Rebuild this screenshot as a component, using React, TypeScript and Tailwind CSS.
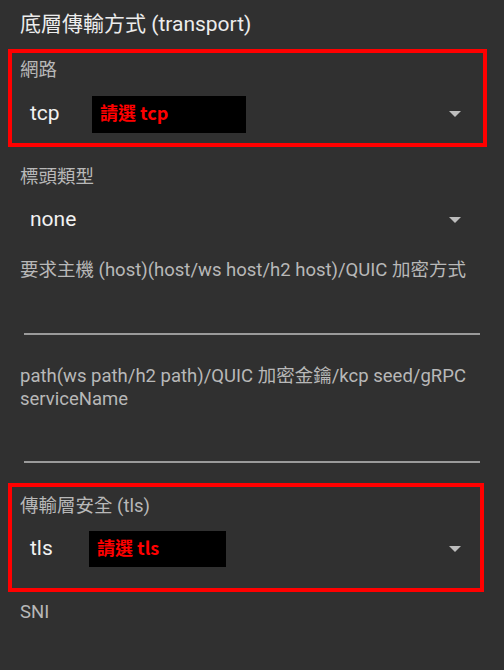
import React from "react";

const FONT = "font-['Roboto','Noto_Sans_CJK_TC',sans-serif]";

function Caret() {
  return (
    <svg width="12" height="7" viewBox="0 0 12 7" className="shrink-0">
      <path d="M0 0 L12 0 L6 6 Z" fill="#bdbdbd" />
    </svg>
  );
}

function Label({ children, className = "" }: { children: React.ReactNode; className?: string }) {
  return <div className={"text-[18.5px] leading-6 text-[#b8b8b8] whitespace-nowrap " + className}>{children}</div>;
}

function SelectRow({
  value,
  note,
  noteClass = "",
  valueClass = "w-[62px]",
  className = "",
}: {
  value: string;
  note?: string;
  noteClass?: string;
  valueClass?: string;
  className?: string;
}) {
  return (
    <div className={"h-10 flex items-center " + className}>
      <span className={"text-[21px] text-[#f2f2f2] " + valueClass}>{value}</span>
      {note && (
        <span
          className={
            "bg-black flex items-center pl-2 pb-[3px] text-[18px] font-bold text-[#ff0000] font-['Noto_Sans_CJK_TC',sans-serif] " +
            noteClass
          }
        >
          {note}
        </span>
      )}
      <span className="flex-1" />
      <Caret />
    </div>
  );
}

export default function App() {
  return (
    <div className={"w-[504px] h-[670px] bg-[#303030] overflow-hidden " + FONT}>
      <div className="h-[49px] flex items-center pl-5 pt-[1px] text-[21px] text-[#ececec]">底層傳輸方式 (transport)</div>

      <div className="ml-2 w-[479px] h-[98px] border-4 border-[#ff0000] pl-2 pr-[22px]">
        <Label className="mt-[5px]">網路</Label>
        <SelectRow value="tcp" note="請選 tcp" noteClass="w-[154px] h-[37px]" className="mt-3 pl-[10px]" />
      </div>

      <div className="pl-5 pr-[43px]">
        <Label className="mt-[18px]">標頭類型</Label>
        <SelectRow value="none" className="mt-[11px] pl-[10px]" />
      </div>

      <div className="pl-5 pr-4">
        <Label className="mt-[18px]">要求主機 (host)(host/ws host/h2 host)/QUIC 加密方式</Label>
        <div className="mt-[51px] ml-1 w-[456px] h-[2px] bg-[#9a9a9a]" />
        <div className="mt-[30px] text-[18.5px] leading-[23px] text-[#b8b8b8]">
          path(ws path/h2 path)/QUIC 加密金鑰/kcp seed/gRPC
          <br />
          serviceName
        </div>
        <div className="mt-[50px] ml-1 w-[456px] h-[2px] bg-[#9a9a9a]" />
      </div>

      <div className="mt-5 ml-2 w-[476px] h-[109px] border-4 border-[#ff0000] pl-2 pr-[19px]">
        <Label className="mt-[7px]">傳輸層安全 (tls)</Label>
        <SelectRow
          value="tls"
          valueClass="w-[59px]"
          note="請選 tls"
          noteClass="w-[137px] h-[36px]"
          className="mt-[11px] pl-[10px]"
        />
      </div>

      <Label className="mt-2 pl-5">SNI</Label>
    </div>
  );
}
